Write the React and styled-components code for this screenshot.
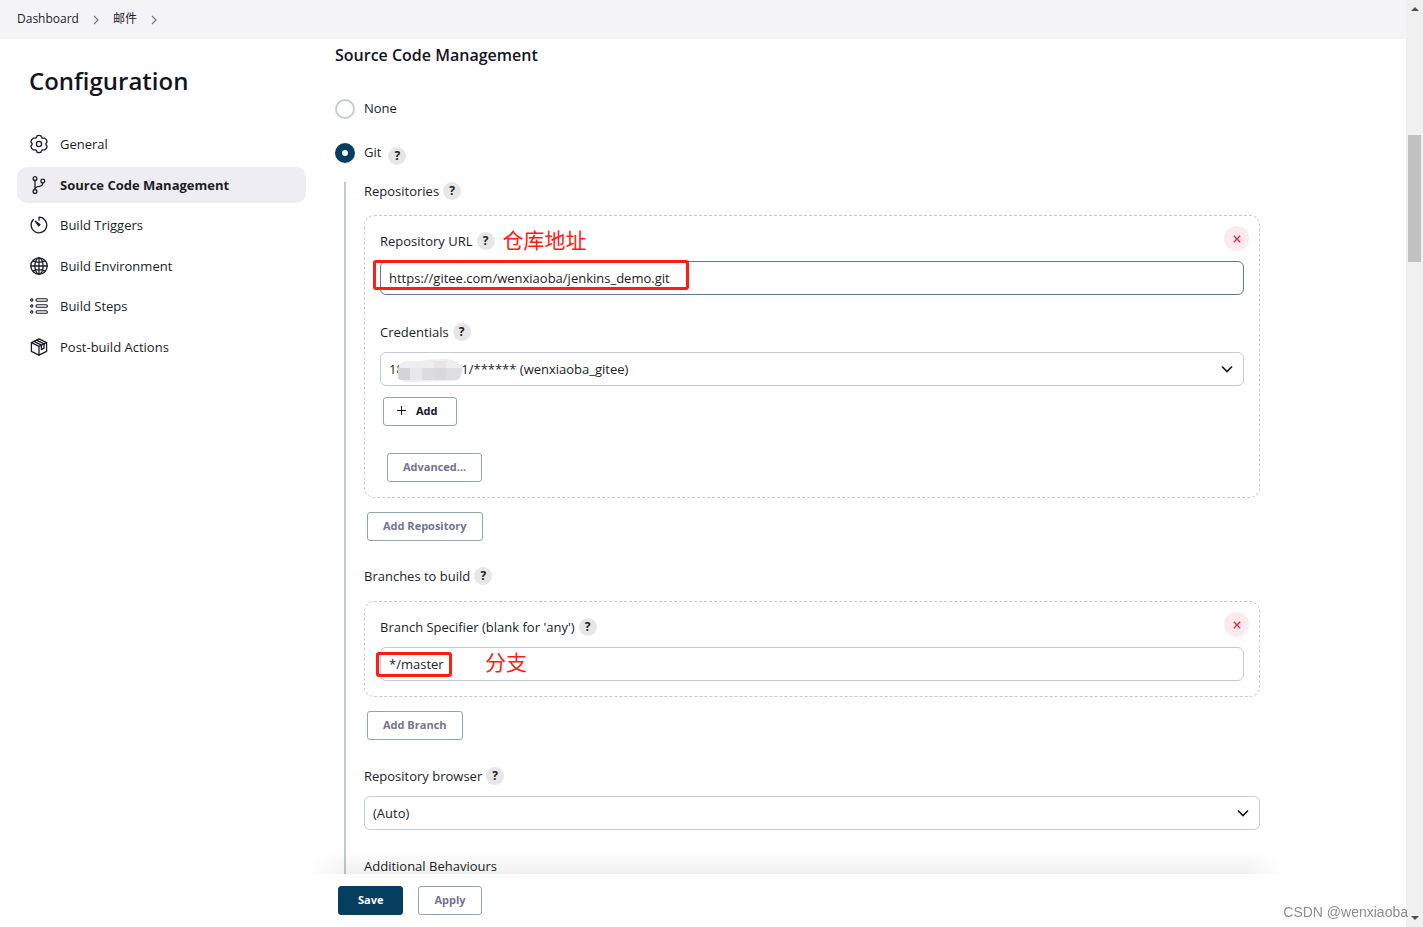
import React, { useState } from "react";
import styled, { createGlobalStyle, css } from "styled-components";

const GlobalStyle = createGlobalStyle`
  *, *::before, *::after { box-sizing: border-box; }
  body {
    margin: 0;
    background: #fff;
    color: #1c1c27;
    font-family: "Open Sans", "Noto Sans CJK SC", sans-serif;
    font-size: 13px;
    line-height: 18px;
  }
  button, input, select { font: inherit; color: inherit; }
`;

const Window = styled.div`
  display: flex;
  height: 100vh;
  overflow: hidden;
`;

const Page = styled.div`
  flex: 1;
  min-width: 0;
  display: flex;
  flex-direction: column;
`;

const Breadcrumbs = styled.nav`
  flex: none;
  display: flex;
  align-items: center;
  gap: 14px;
  height: 39px;
  padding: 0 17px 2px;
  background: #f4f4f6;
  font-size: 12px;

  svg { margin-top: 2px; }
`;

const Crumb = styled.a`
  color: inherit;
  text-decoration: none;
`;

const Columns = styled.div`
  flex: 1;
  min-height: 0;
  display: flex;
`;

const Sidebar = styled.aside`
  flex: none;
  width: 320px;
  padding: 24px 14px 0 17px;
`;

const PageTitle = styled.h1`
  margin: 0 0 27px 12px;
  font-size: 24px;
  line-height: 36px;
  font-weight: 600;
  color: #14141f;
`;

const Tasks = styled.nav`
  display: flex;
  flex-direction: column;
  justify-content: space-between;
  height: 239px;
`;

const Task = styled.a`
  display: flex;
  align-items: center;
  gap: 12px;
  height: 36px;
  padding: 0 13px;
  border-radius: 10px;
  color: inherit;
  text-decoration: none;
  font-weight: ${(p) => (p.$active ? 700 : 400)};
  background: ${(p) => (p.$active ? "#eeeef2" : "transparent")};

  svg { flex: none; width: 18px; height: 18px; overflow: visible; }
`;

const Main = styled.main`
  flex: 1;
  min-width: 0;
  display: flex;
  flex-direction: column;
`;

const Form = styled.div`
  flex: 1;
  min-height: 0;
  display: flex;
  flex-direction: column;
  overflow: hidden;
  padding: 0 146px 0 15px;
`;

const SectionTitle = styled.h2`
  flex: none;
  margin: 0 0 28px;
  font-size: 16px;
  line-height: 32px;
  font-weight: 600;
  color: #14141f;
`;

const RadioRow = styled.div`
  flex: none;
  display: flex;
  align-items: center;
  gap: 7px;
  height: 20px;
  margin-bottom: ${(p) => (p.$last ? 19 : 24)}px;
`;

const RadioLabel = styled.label`
  display: flex;
  align-items: flex-start;
  gap: 9px;
`;

const Radio = styled.input`
  appearance: none;
  width: 20px;
  height: 20px;
  margin: 0;
  border: 2px solid #c3ccd1;
  border-radius: 50%;
  background: #fff;

  &:checked { border: 7px solid #063e60; }
`;

const Nested = styled.div`
  flex: 1;
  min-height: 0;
  display: flex;
  flex-direction: column;
  margin-left: 9px;
  padding-left: 18px;
  border-left: 2px solid #bfcbce;
`;

const LabelRow = styled.div`
  flex: none;
  display: flex;
  align-items: center;
  gap: 4px;
  height: 18px;
  margin-bottom: ${(p) => p.$gap ?? 11}px;
`;

const HelpButton = styled.button`
  flex: none;
  width: 18px;
  height: 18px;
  padding: 0;
  border: 0;
  border-radius: 50%;
  background: #e6e6e6;
  font-size: 12px;
  line-height: 18px;
  font-weight: 700;
  ${(p) => p.$low && css`align-self: flex-end; margin-bottom: -2px;`}
`;

const Card = styled.section`
  flex: none;
  position: relative;
  display: flex;
  flex-direction: column;
  align-items: stretch;
  margin-bottom: 14px;
  padding: 16px 15px 15px;
  border: 1px dashed #c3c9cc;
  border-radius: 10px;
`;

const DeleteButton = styled.button`
  position: absolute;
  top: 10px;
  right: 10px;
  display: grid;
  place-items: center;
  width: 25px;
  height: 25px;
  padding: 0;
  border: 0;
  border-radius: 50%;
  background: #fdeaec;
  color: #e6243f;
`;

const Field = styled.div`
  flex: none;
  position: relative;
  margin-bottom: ${(p) => p.$gap || 0}px;

  > svg { position: absolute; right: 11px; top: 11px; pointer-events: none; }
`;

const control = css`
  display: block;
  width: 100%;
  height: 34px;
  padding: 0 8px;
  border: 1px solid ${(p) => (p.$focus ? "#5f7a8a" : "#c3ccd6")};
  border-radius: 6px;
  background: #fff;
  outline: none;
`;

const TextInput = styled.input`${control}`;

const Select = styled.select`
  ${control}
  appearance: none;
`;

const Censor = styled.span`
  position: absolute;
  left: 17px;
  top: 7px;
  line-height: 0;
`;

const Highlight = styled.span`
  position: absolute;
  border: 3px solid #ff1c12;
  border-radius: 3px;
  pointer-events: none;
  ${(p) =>
    p.$target === "url"
      ? css`left: -7px; top: -1px; width: 316px; height: 30px;`
      : css`left: -4px; top: 5px; width: 76px; height: 25px;`}
`;

const Note = styled.span`
  color: #ff1c12;
  font-family: "Noto Sans CJK SC", sans-serif;
  font-size: 21px;
  line-height: 24px;
  font-weight: 400;
  ${(p) =>
    p.$over
      ? css`position: absolute; left: 105px; top: 2px;`
      : css`margin: 0 0 4px 4px;`}
`;

const Button = styled.button`
  flex: none;
  align-self: flex-start;
  display: flex;
  align-items: center;
  gap: 10px;
  height: 29px;
  margin: 0 0 ${(p) => p.$gap || 0}px ${(p) => p.$indent || 0}px;
  padding: ${(p) => p.$pad || "0 15px 2px"};
  border: 1px solid ${(p) => (p.$primary ? "#063e60" : "#93a4b0")};
  border-radius: 3px;
  background: ${(p) => (p.$primary ? "#063e60" : "#fff")};
  color: ${(p) => (p.$primary ? "#fff" : p.$strong ? "#14141f" : "#737390")};
  font-size: 11px;
  font-weight: 700;
`;

const BottomBar = styled.footer`
  flex: none;
  position: relative;
  display: flex;
  gap: 15px;
  height: 53px;
  padding: 12px 18px;
  background: #fff;

  &::before {
    content: "";
    position: absolute;
    left: -14px;
    right: 120px;
    bottom: 100%;
    height: 24px;
    background: linear-gradient(to bottom, rgba(0, 0, 0, 0), rgba(0, 0, 0, 0.06));
    mask-image: linear-gradient(to right, transparent, #000 40px, #000 calc(100% - 40px), transparent);
    pointer-events: none;
  }
`;

const ScrollTrack = styled.div`
  flex: none;
  display: flex;
  flex-direction: column;
  align-items: center;
  width: 17px;
  padding: 7px 0;
  background: #f0f0f0;
`;

const ScrollThumb = styled.div`
  width: 13px;
  height: 127px;
  margin: 124px 0 auto;
  background: #c1c1c1;
`;

const Watermark = styled.div`
  position: fixed;
  right: 15px;
  bottom: 6px;
  color: #8d8d8d;
  font-family: "Liberation Sans", sans-serif;
  font-size: 14px;
`;

const CrumbArrow = () => (
  <svg width="6" height="10" viewBox="0 0 6 10" fill="none" stroke="#777783" strokeWidth="1.2">
    <path d="M1 1l4 4-4 4" />
  </svg>
);

const Chevron = () => (
  <svg width="12" height="12" viewBox="0 0 12 12" fill="none" stroke="#14141f" strokeWidth="1.7">
    <path d="M1 3.5l5 5 5-5" />
  </svg>
);

const Cross = () => (
  <svg width="8" height="8" viewBox="0 0 8 8" stroke="currentColor" strokeWidth="1.3">
    <path d="M0.8 0.8l6.4 6.4M7.2 0.8L0.8 7.2" />
  </svg>
);

const Plus = () => (
  <svg width="9" height="9" viewBox="0 0 9 9" stroke="currentColor" strokeWidth="1">
    <path d="M4.5 0v9M0 4.5h9" />
  </svg>
);

const TaskIcon = ({ children }) => (
  <svg
    viewBox="0 0 18 18"
    fill="none"
    stroke="currentColor"
    strokeWidth="1.3"
    strokeLinecap="round"
    strokeLinejoin="round"
    aria-hidden="true"
  >
    {children}
  </svg>
);

const GearIcon = () => (
  <TaskIcon>
    <circle cx="9" cy="9" r="2.6" />
    <path d="M7 .9Q9-.1 11 .9L12.1 3.2L14.8 3.2Q16.8 4.3 17.1 6.6L15.7 9L17.1 11.4Q16.8 13.7 14.8 14.8L12.1 14.8L11 17.1Q9 18.1 7 17.1L5.9 14.8L3.2 14.8Q1.2 13.7 .9 11.4L2.3 9L.9 6.6Q1.2 4.3 3.2 3.2L5.9 3.2Z" />
  </TaskIcon>
);

const BranchIcon = () => (
  <TaskIcon>
    <circle cx="5" cy="2.6" r="1.9" />
    <circle cx="5" cy="15.4" r="1.9" />
    <circle cx="12.8" cy="5" r="1.9" />
    <path d="M5 4.5v9M12.8 6.9Q12.8 9.8 9.3 10.3Q5 10.8 5 13.4" />
  </TaskIcon>
);

const TimerIcon = () => (
  <TaskIcon>
    <path d="M9 4.2V1.2A7.8 7.8 0 1 1 3.4 3.5" />
    <path d="M5.2 5.2L10 8.6L8.7 9.9Z" fill="currentColor" />
  </TaskIcon>
);

const GlobeIcon = () => (
  <TaskIcon>
    <circle cx="9" cy="9" r="8.2" />
    <ellipse cx="9" cy="9" rx="4.1" ry="8.2" />
    <path d="M9 .8v16.4M.8 9h16.4M3 3.9Q9 6.7 15 3.9M3 14.1Q9 11.3 15 14.1" />
  </TaskIcon>
);

const StepsIcon = () => (
  <TaskIcon>
    {[3, 9, 15].map((y) => (
      <g key={y} strokeWidth="1.1">
        <circle cx="1.7" cy={y} r="1.1" />
        <rect x="6" y={y - 1.3} width="11.4" height="2.6" rx="1.3" />
      </g>
    ))}
  </TaskIcon>
);

const PackageIcon = () => (
  <TaskIcon>
    <path d="M9 .8l7.6 3.9v8.6L9 17.2l-7.6-3.9V4.7z" />
    <path d="M1.4 4.7L9 8.4l7.6-3.7M9 8.4v8.8" />
    <path d="M4 3.4l7.4 3.8v4.4l2.6-1.5V5.9L6.6 2.1" />
  </TaskIcon>
);

const Mosaic = () => (
  <svg width="68" height="24" viewBox="0 0 68 24">
    <path d="M1 11Q1 3 10 2L24 2Q32 0 48 0Q66 1 66 12Q65 22 56 22L14 23Q1 23 1 15z" fill="#eeeef0" />
    <path d="M1 9h12v12H4Q1 21 1 17z" fill="#d4d4d7" />
    <path d="M13 9h12v12H13z" fill="#e8e8ea" />
    <path d="M25 9h12v12H25z" fill="#dcdcdf" />
    <path d="M37 2h12v7H37z" fill="#e6e6e8" />
    <path d="M37 9h12v12H37z" fill="#d9d9dc" />
    <path d="M49 9h16q0 9-6 12H49z" fill="#dedee1" />
  </svg>
);

const Arrow = ({ down }) => (
  <svg width="8" height="4" viewBox="0 0 8 4" fill="#505050">
    <path d={down ? "M0 0h8L4 4z" : "M0 4h8L4 0z"} />
  </svg>
);

const tasks = [
  ["General", GearIcon],
  ["Source Code Management", BranchIcon],
  ["Build Triggers", TimerIcon],
  ["Build Environment", GlobeIcon],
  ["Build Steps", StepsIcon],
  ["Post-build Actions", PackageIcon],
];

const Help = ({ topic, low }) => (
  <HelpButton type="button" $low={low} aria-label={`Help for ${topic}`}>?</HelpButton>
);

export default function App() {
  const [scm, setScm] = useState("git");
  const [url, setUrl] = useState("https://gitee.com/wenxiaoba/jenkins_demo.git");
  const [branch, setBranch] = useState("*/master");

  return (
    <Window>
      <GlobalStyle />
      <Page>
        <Breadcrumbs aria-label="Breadcrumb">
          <Crumb href="#dashboard">Dashboard</Crumb>
          <CrumbArrow />
          <Crumb href="#job">邮件</Crumb>
          <CrumbArrow />
        </Breadcrumbs>
        <Columns>
          <Sidebar>
            <PageTitle>Configuration</PageTitle>
            <Tasks aria-label="Sections">
              {tasks.map(([name, Icon]) => (
                <Task key={name} href="#section" $active={name === "Source Code Management"}>
                  <Icon />
                  {name}
                </Task>
              ))}
            </Tasks>
          </Sidebar>
          <Main>
            <Form>
              <SectionTitle>Source Code Management</SectionTitle>
              <RadioRow>
                <RadioLabel>
                  <Radio type="radio" name="scm" checked={scm === "none"} onChange={() => setScm("none")} />
                  None
                </RadioLabel>
              </RadioRow>
              <RadioRow $last>
                <RadioLabel>
                  <Radio type="radio" name="scm" checked={scm === "git"} onChange={() => setScm("git")} />
                  Git
                </RadioLabel>
                <Help topic="Git" low />
              </RadioRow>
              <Nested>
                <LabelRow $gap={15}>
                  <span>Repositories</span>
                  <Help topic="Repositories" />
                </LabelRow>
                <Card>
                  <DeleteButton type="button" aria-label="Delete repository"><Cross /></DeleteButton>
                  <LabelRow>
                    <label htmlFor="url">Repository URL</label>
                    <Help topic="Repository URL" />
                    <Note>仓库地址</Note>
                  </LabelRow>
                  <Field $gap={28}>
                    <TextInput id="url" $focus value={url} onChange={(e) => setUrl(e.target.value)} />
                    <Highlight $target="url" />
                  </Field>
                  <LabelRow>
                    <label htmlFor="credentials">Credentials</label>
                    <Help topic="Credentials" />
                  </LabelRow>
                  <Field $gap={11}>
                    <Select id="credentials">
                      <option>{"18" + "\u00a0".repeat(17) + "1/****** (wenxiaoba_gitee)"}</option>
                    </Select>
                    <Censor><Mosaic /></Censor>
                    <Chevron />
                  </Field>
                  <Button type="button" $strong $indent={3} $gap={27} $pad="0 18px 2px 13px"><Plus />Add</Button>
                  <Button type="button" $indent={7}>Advanced...</Button>
                </Card>
                <Button type="button" $indent={3} $gap={26}>Add Repository</Button>
                <LabelRow $gap={16}>
                  <span>Branches to build</span>
                  <Help topic="Branches to build" />
                </LabelRow>
                <Card>
                  <DeleteButton type="button" aria-label="Delete branch"><Cross /></DeleteButton>
                  <LabelRow>
                    <label htmlFor="branch">Branch Specifier (blank for 'any')</label>
                    <Help topic="Branch Specifier" />
                  </LabelRow>
                  <Field>
                    <TextInput id="branch" value={branch} onChange={(e) => setBranch(e.target.value)} />
                    <Highlight $target="branch" />
                    <Note $over>分支</Note>
                  </Field>
                </Card>
                <Button type="button" $indent={3} $gap={27}>Add Branch</Button>
                <LabelRow>
                  <label htmlFor="browser">Repository browser</label>
                  <Help topic="Repository browser" />
                </LabelRow>
                <Field $gap={27}>
                  <Select id="browser">
                    <option>(Auto)</option>
                  </Select>
                  <Chevron />
                </Field>
                <LabelRow $gap={0}>
                  <span>Additional Behaviours</span>
                </LabelRow>
              </Nested>
            </Form>
            <BottomBar>
              <Button type="submit" $primary $pad="0 19px 2px">Save</Button>
              <Button type="button">Apply</Button>
            </BottomBar>
          </Main>
        </Columns>
      </Page>
      <ScrollTrack aria-hidden="true">
        <Arrow />
        <ScrollThumb />
        <Arrow down />
      </ScrollTrack>
      <Watermark>CSDN @wenxiaoba</Watermark>
    </Window>
  );
}
